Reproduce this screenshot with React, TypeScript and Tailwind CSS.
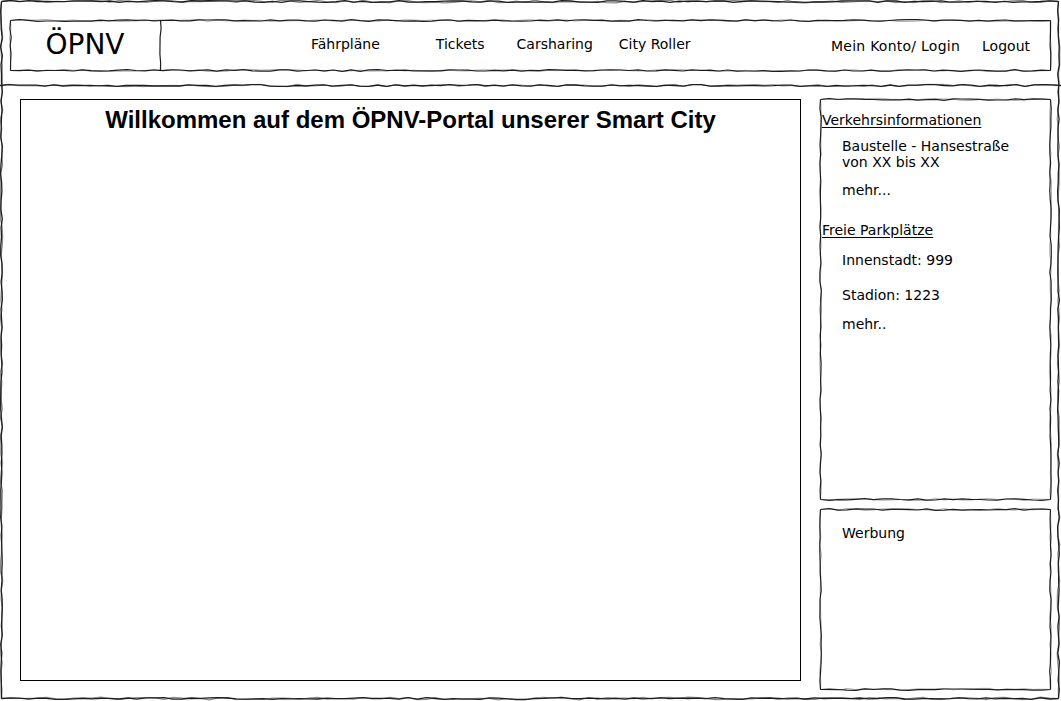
import React from "react";

function rng(seed: number) {
  let s = seed % 2147483647;
  if (s <= 0) s += 2147483646;
  return () => {
    s = (s * 16807) % 2147483647;
    return (s - 1) / 2147483646;
  };
}

function wavy(x1: number, y1: number, x2: number, y2: number, r: () => number, amp = 0.8, step = 9) {
  const len = Math.hypot(x2 - x1, y2 - y1);
  const n = Math.max(2, Math.round(len / step));
  const dx = (x2 - x1) / len;
  const dy = (y2 - y1) / len;
  const px = -dy;
  const py = dx;
  let d = `M${x1.toFixed(1)} ${y1.toFixed(1)}`;
  for (let i = 1; i <= n; i++) {
    const t = i / n;
    const off = i === n ? 0 : (r() * 2 - 1) * amp;
    const x = x1 + (x2 - x1) * t + px * off;
    const y = y1 + (y2 - y1) * t + py * off;
    d += ` L${x.toFixed(1)} ${y.toFixed(1)}`;
  }
  return d;
}

function rectPath(x: number, y: number, w: number, h: number, seed: number, amp = 0.8) {
  const r = rng(seed);
  return [
    wavy(x, y, x + w, y, r, amp),
    wavy(x + w, y, x + w, y + h, r, amp),
    wavy(x + w, y + h, x, y + h, r, amp),
    wavy(x, y + h, x, y, r, amp),
  ].join(" ");
}

function SketchOverlay({ w, h, seed, extra }: { w: number; h: number; seed: number; extra?: string[] }) {
  return (
    <svg
      className="absolute left-0 top-0 pointer-events-none overflow-visible"
      width={w}
      height={h}
      viewBox={`0 0 ${w} ${h}`}
    >
      <path d={rectPath(0.5, 0.5, w - 1, h - 1, seed + 7, 1.1)} fill="none" stroke="#9a9a9a" strokeWidth={0.8} />
      <path d={rectPath(0.5, 0.5, w - 1, h - 1, seed, 0.8)} fill="none" stroke="#1c1c1c" strokeWidth={1.2} />
      {extra?.map((d, i) => (
        <path key={i} d={d} fill="none" stroke="#1c1c1c" strokeWidth={1.2} />
      ))}
    </svg>
  );
}

export default function App() {
  const r1 = rng(101);
  const r2 = rng(202);
  const hline = wavy(0, 85.5, 1061, 85.5, r1, 0.9);
  const hline2 = wavy(0, 85.5, 1061, 85.5, r2, 1.2);
  const divider = wavy(150.5, 0, 150.5, 51, rng(303), 0.6);

  return (
    <div className="relative w-[1061px] h-[701px] overflow-hidden bg-white text-black font-['DejaVu_Sans',Verdana,sans-serif] text-[14px]">
      <svg className="absolute left-0 top-0 pointer-events-none" width={1061} height={701} viewBox="0 0 1061 701">
        <path d={rectPath(1.5, 1.5, 1057, 697, 11, 1.3)} fill="none" stroke="#8a8a8a" strokeWidth={1.2} />
        <path d={rectPath(1.5, 1.5, 1057, 697, 12, 0.9)} fill="none" stroke="#1c1c1c" strokeWidth={1.3} />
        <path d={hline2} fill="none" stroke="#8a8a8a" strokeWidth={1} />
        <path d={hline} fill="none" stroke="#1c1c1c" strokeWidth={1.3} />
      </svg>

      {/* Header */}
      <div className="pt-[20px] pl-[10px]">
        <div className="relative flex h-[51px] w-[1041px] items-center">
          <SketchOverlay w={1041} h={51} seed={41} extra={[divider]} />
          <div className="flex h-full w-[150px] items-center justify-center text-[28px] leading-none pb-[2px]">
            ÖPNV
          </div>
          <span className="ml-[151px] mb-[3px]">Fährpläne</span>
          <span className="ml-[56px] mb-[3px]">Tickets</span>
          <span className="ml-[32px] mb-[3px]">Carsharing</span>
          <span className="ml-[26px] mb-[3px]">City Roller</span>
          <div className="flex-1" />
          <span className="mt-[1px] tracking-[0.25px]">Mein Konto/ Login</span>
          <span className="mt-[1px] ml-[22px] mr-[21px]">Logout</span>
        </div>
      </div>

      {/* Main */}
      <div className="mt-[28px] flex pl-[20px] gap-[19px]">
        <div className="h-[582px] w-[781px] border border-black">
          <h1 className="mt-[6px] text-center font-['Liberation_Sans',Arial,sans-serif] text-[24px] font-bold leading-[28px]">
            Willkommen auf dem ÖPNV-Portal unserer Smart City
          </h1>
        </div>

        <div className="flex w-[231px] flex-col gap-[9px]">
          <div className="relative h-[401px] w-[231px] pt-[13px] pl-[2px] leading-[16px]">
            <SketchOverlay w={231} h={401} seed={57} />
            <div className="underline underline-offset-[2px]">Verkehrsinformationen</div>
            <div className="mt-[10px] pl-[20px]">
              Baustelle - Hansestraße
              <br />
              von XX bis XX
            </div>
            <div className="mt-[12px] pl-[20px]">mehr...</div>
            <div className="mt-[24px] underline underline-offset-[2px]">Freie Parkplätze</div>
            <div className="mt-[14px] pl-[20px]">Innenstadt: 999</div>
            <div className="mt-[19px] pl-[20px]">Stadion: 1223</div>
            <div className="mt-[13px] pl-[20px]">mehr..</div>
          </div>
          <div className="relative h-[181px] w-[231px] pt-[16px] pl-[22px] leading-[16px]">
            <SketchOverlay w={231} h={181} seed={83} />
            <div>Werbung</div>
          </div>
        </div>
      </div>
    </div>
  );
}
